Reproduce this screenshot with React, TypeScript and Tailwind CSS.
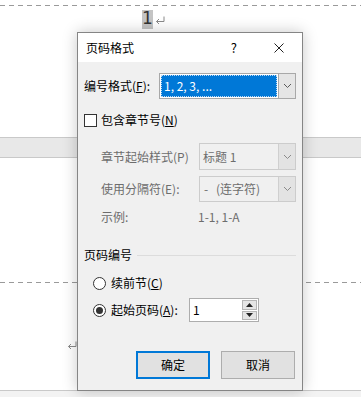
import React from 'react';

const dashed =
  'h-px w-full bg-[repeating-linear-gradient(90deg,#9a9a9a_0_5px,transparent_5px_9px)]';

function Chevron({ color = '#5a5a5a' }: { color?: string }) {
  return (
    <svg width="9" height="6" viewBox="0 0 9 6">
      <path d="M1 1 L4.5 4.5 L8 1" fill="none" stroke={color} strokeWidth="1" />
    </svg>
  );
}

function ReturnMark({ className = '' }: { className?: string }) {
  return (
    <svg className={className} width="10" height="9" viewBox="0 0 10 9">
      <path d="M9 0.5 V5.5 H1.5 M4 3 L1.5 5.5 L4 8" fill="none" stroke="#8a8a8a" strokeWidth="1" />
    </svg>
  );
}

function DropButton({ disabled }: { disabled?: boolean }) {
  return (
    <div
      className={`flex w-[17px] items-center justify-center border-l ${
        disabled ? 'border-[#cfcfcf] bg-[#e3e3e3]' : 'border-[#a8a8a8] bg-[#e5e5e5]'
      }`}
    >
      <Chevron color={disabled ? '#8a8a8a' : '#5a5a5a'} />
    </div>
  );
}

function Radio({ checked }: { checked?: boolean }) {
  return (
    <span className="flex h-[13px] w-[13px] items-center justify-center rounded-full border border-[#333] bg-white">
      {checked && <span className="h-[7px] w-[7px] rounded-full bg-[#333]" />}
    </span>
  );
}

function PageNumberDialog() {
  return (
    <div className="absolute left-[77px] top-[32px] flex h-[359px] w-[226px] flex-col border border-[#858585] bg-[#f0f0f0] text-[12px] text-black shadow-[0_0_14px_rgba(0,0,0,0.22)]">
      <div className="flex h-[29px] items-center bg-white pl-[8px]">
        <span>页码格式</span>
        <span className="ml-auto text-[13px]">?</span>
        <svg className="ml-[37px] mr-[18px]" width="10" height="10" viewBox="0 0 10 10">
          <path d="M0.5 0.5 L9.5 9.5 M9.5 0.5 L0.5 9.5" stroke="#222" strokeWidth="1" />
        </svg>
      </div>

      <div className="flex flex-1 flex-col px-[6px]">
        <div className="mt-[11px] flex h-[26px] items-center">
          <span>
            编号格式(<u>F</u>):
          </span>
          <div className="ml-auto flex h-full w-[137px] border border-[#a8a8a8] bg-white">
            <div className="flex flex-1 p-px">
              <div className="flex flex-1 items-center border border-dotted border-[#bcd9f2] bg-[#0078d7] pl-[2px] text-white">
                1, 2, 3, ...
              </div>
            </div>
            <DropButton />
          </div>
        </div>

        <div className="mt-[14px] flex h-[14px] items-center">
          <span className="h-[13px] w-[13px] border border-[#333] bg-white" />
          <span className="ml-[4px]">
            包含章节号(<u>N</u>)
          </span>
        </div>

        <div className="flex flex-col pl-[17px] text-[#6d6d6d]">
          <div className="mt-[16px] flex h-[27px] items-center">
            <span>章节起始样式(P)</span>
            <div className="ml-auto flex h-full w-[97px] border border-[#cccccc] bg-[#f0f0f0]">
              <div className="flex flex-1 items-center pl-[3px]">标题 1</div>
              <DropButton disabled />
            </div>
          </div>
          <div className="mt-[6px] flex h-[26px] items-center">
            <span>使用分隔符(E):</span>
            <div className="ml-auto flex h-full w-[97px] border border-[#cccccc] bg-[#f0f0f0]">
              <div className="flex flex-1 items-center pl-[4px]">
                <span className="w-[12px]">-</span>
                <span>(连字符)</span>
              </div>
              <DropButton disabled />
            </div>
          </div>
          <div className="mt-[8px] flex h-[14px] items-center">
            <span className="w-[97px]">示例:</span>
            <span>1-1, 1-A</span>
          </div>
        </div>

        <div className="mt-[24px] flex h-[14px] items-center">
          <span>页码编号</span>
          <span className="ml-[5px] h-px flex-1 bg-[#dcdcdc]" />
        </div>

        <div className="mt-[14px] flex h-[14px] items-center pl-[9px]">
          <Radio />
          <span className="ml-[5px]">
            续前节(<u>C</u>)
          </span>
        </div>

        <div className="mt-[8px] flex h-[24px] items-center pl-[9px]">
          <Radio checked />
          <span className="ml-[5px] w-[78px]">
            起始页码(<u>A</u>):
          </span>
          <div className="flex h-full w-[70px] border border-[#adadad] bg-white">
            <div className="flex flex-1 items-center pl-[3px]">1</div>
            <div className="my-px mr-px flex w-[15px] flex-col gap-px">
              <div className="flex flex-1 items-center justify-center border border-[#b5b5b5] bg-[#e5e5e5]">
                <svg width="7" height="4" viewBox="0 0 7 4">
                  <path d="M0 4 L3.5 0 L7 4 Z" fill="#222" />
                </svg>
              </div>
              <div className="flex flex-1 items-center justify-center border border-[#b5b5b5] bg-[#e5e5e5]">
                <svg width="7" height="4" viewBox="0 0 7 4">
                  <path d="M0 0 L3.5 4 L7 0 Z" fill="#222" />
                </svg>
              </div>
            </div>
          </div>
        </div>

        <div className="mt-[29px] flex h-[28px] justify-end gap-[11px] pr-px">
          <button
            type="button"
            className="flex w-[74px] items-center justify-center border-2 border-[#0078d7] bg-[#e1e1e1]"
          >
            确定
          </button>
          <button
            type="button"
            className="flex w-[74px] items-center justify-center border border-[#adadad] bg-[#e1e1e1]"
          >
            取消
          </button>
        </div>
      </div>
    </div>
  );
}

export default function App() {
  return (
    <div className="relative h-[397px] w-[361px] overflow-hidden bg-white font-['Microsoft_YaHei_UI','Noto_Sans_CJK_SC',sans-serif]">
      <div className="flex h-full flex-col">
        <div className={`mt-[5px] ${dashed}`} />
        <div className="mt-[4px] flex h-[19px] items-center pl-[142px]">
          <span className="flex h-[19px] w-[11px] items-end justify-center bg-[#c4c4c4] pb-[2px] font-['DejaVu_Sans',sans-serif] text-[17px] font-normal leading-none text-[#333]">
            1
          </span>
          <ReturnMark className="ml-[2px] mt-[2px]" />
        </div>
        <div className="mt-[108px] h-[21px] border-y border-[#c9c9c9] bg-[#e8e8e8]" />
        <div className={`mt-[124px] ${dashed}`} />
        <div className="mt-[56px] flex h-[12px] items-center pl-[67px]">
          <ReturnMark />
        </div>
        <div className="mt-[39px] flex-1 border-t border-[#c9c9c9] bg-[#f3f3f3]" />
      </div>
      <PageNumberDialog />
    </div>
  );
}
